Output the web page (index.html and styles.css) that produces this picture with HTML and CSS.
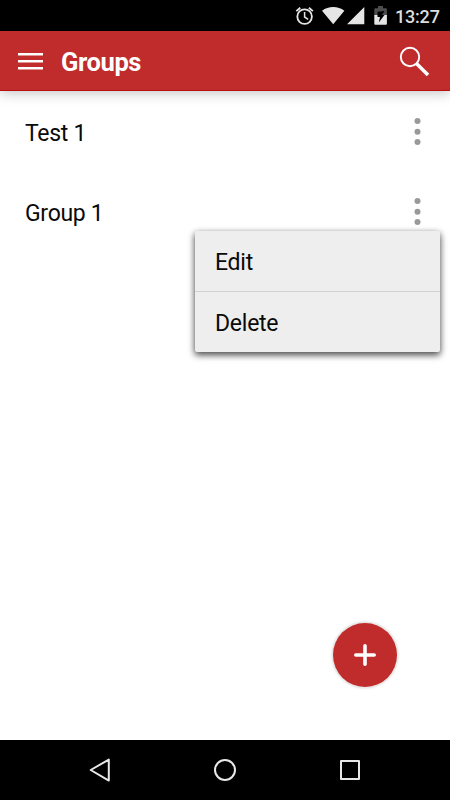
FILE: index.html
```html
<!DOCTYPE html>
<html lang="en">
<head>
<meta charset="utf-8">
<title>Groups</title>
<link rel="stylesheet" href="styles.css">
</head>
<body>
<div class="screen">
  <div class="status">
    <svg class="status-icons" width="94" height="31" viewBox="295 0 94 31">
      <g fill="none" stroke="#e6e6e6" stroke-width="1.8">
        <circle cx="304.6" cy="16.6" r="7.3"/>
        <path d="M304.6 12v5l3.6 2.3" stroke-width="1.5"/>
        <path d="M296.3 11.1l4-3.4M308.9 7.7l4 3.4"/>
      </g>
      <path fill="#e6e6e6" d="M333.2 24.3L322 10.7Q327 7 333.2 7T344.4 10.7ZM347 24.3L364.3 7V24.3Z"/>
      <path fill="#4d4d4d" d="M374.3 9.2q0-1 1-1H378V6h5v2.2h2.9q1 0 1 1V16h-12.6Z"/>
      <path fill="#e6e6e6" d="M374.3 15h12.6v8.7q0 1-1 1h-10.6q-1 0-1-1Z"/>
      <path fill="#000" d="M384.5 11L377.5 11.8V17H380L378.8 22.5L384.5 15H382Z"/>
    </svg>
    <span class="time">13:27</span>
  </div>
  <header class="bar">
    <svg class="menu-icon" width="25" height="19" viewBox="0 0 25 19"><path d="M0 2.300h25M0 9.300h25M0 16.300h25" stroke="#fff" stroke-width="2.600"/></svg>
    <h1>Groups</h1>
    <svg class="search" width="32" height="32" viewBox="398 44 32 32">
      <circle cx="410" cy="56" r="9.200" fill="none" stroke="#fff" stroke-width="1.900"/>
      <path d="M416.700 62.700L428 74" stroke="#fff" stroke-width="3.500"/>
    </svg>
  </header>
  <main class="list">
    <div class="row"><span>Test 1</span><svg class="dots" width="7" height="28" viewBox="0 0 7 28"><circle cx="3.500" cy="3" r="3"/><circle cx="3.500" cy="13.700" r="3"/><circle cx="3.500" cy="24" r="3"/></svg></div>
    <div class="row"><span>Group 1</span><svg class="dots" width="7" height="28" viewBox="0 0 7 28"><circle cx="3.500" cy="3" r="3"/><circle cx="3.500" cy="13.700" r="3"/><circle cx="3.500" cy="24" r="3"/></svg></div>
  </main>
  <div class="popup">
    <div class="item">Edit</div>
    <div class="item">Delete</div>
  </div>
  <div class="fab">
    <svg width="22" height="22" viewBox="0 0 22 22"><path d="M11 1.800v18.400M1.800 11h18.400" stroke="#fff" stroke-width="3.600" stroke-linecap="round"/></svg>
  </div>
  <nav class="nav">
    <svg width="450" height="60" viewBox="0 740 450 60" fill="none" stroke="#e8e8e8" stroke-width="2" stroke-linejoin="round">
      <path d="M90.700 770L108.800 759.600V780.600Z"/>
      <circle cx="225" cy="770" r="10"/>
      <rect x="341" y="761" width="18" height="18"/>
    </svg>
  </nav>
</div>
</body>
</html>
```
FILE: styles.css
```css
* { box-sizing: border-box; }
body { margin: 0; font-family: Roboto, "Liberation Sans", sans-serif; }
.screen {
  position: relative;
  display: flex;
  flex-direction: column;
  width: 450px;
  height: 800px;
  background: #fff;
  overflow: hidden;
}
.status {
  display: flex;
  align-items: center;
  height: 31px;
  padding-left: 295px;
  background: #000;
}
.time {
  margin: 2px 0 0 6px;
  font-size: 18px;
  font-weight: 500;
  letter-spacing: -.2px;
  line-height: 22px;
  color: #dedede;
}
.bar {
  display: flex;
  align-items: center;
  height: 60px;
  padding: 0 20px 0 18px;
  background: #c02b2b;
  border-bottom: 1px solid #b80f0f;
  box-shadow: 0 2px 12px rgba(0, 0, 0, .24);
}
.menu-icon { margin-top: 1px; }
.bar h1 {
  margin: 3px 0 0 18px;
  font-size: 25.500px;
  letter-spacing: -.4px;
  line-height: 30px;
  font-weight: 700;
  color: #fff;
}
.search { margin-left: auto; }
.list { flex: 1; padding-top: 1px; }
.row {
  display: flex;
  align-items: center;
  justify-content: space-between;
  height: 80px;
  padding: 0 29px 0 25px;
  font-size: 23px;
  letter-spacing: -.3px;
  color: #0a0a0a;
}
.row span { margin-top: 2px; }
.dots { fill: #999; margin-top: -1px; }
.popup {
  position: absolute;
  left: 195px;
  top: 231px;
  width: 245px;
  height: 121px;
  border-radius: 2px;
  background: #eee;
  box-shadow: 0 3px 7px rgba(0, 0, 0, .6), 0 2px 6px rgba(0, 0, 0, .25);
}
.item {
  height: 60px;
  padding-left: 20px;
  font-size: 23px;
  letter-spacing: -.25px;
  line-height: 64px;
  color: #0a0a0a;
}
.item + .item { height: 61px; border-top: 1px solid #d2d2d2; }
.fab {
  position: absolute;
  left: 333px;
  top: 623px;
  display: flex;
  align-items: center;
  justify-content: center;
  width: 64px;
  height: 64px;
  border-radius: 50%;
  background: #c02b2b;
  box-shadow: 0 0 0 1.500px #e8e8e8, 0 0 3px 1px rgba(0, 0, 0, .15);
}
.nav { height: 60px; background: #000; }
.nav svg { display: block; }
```
